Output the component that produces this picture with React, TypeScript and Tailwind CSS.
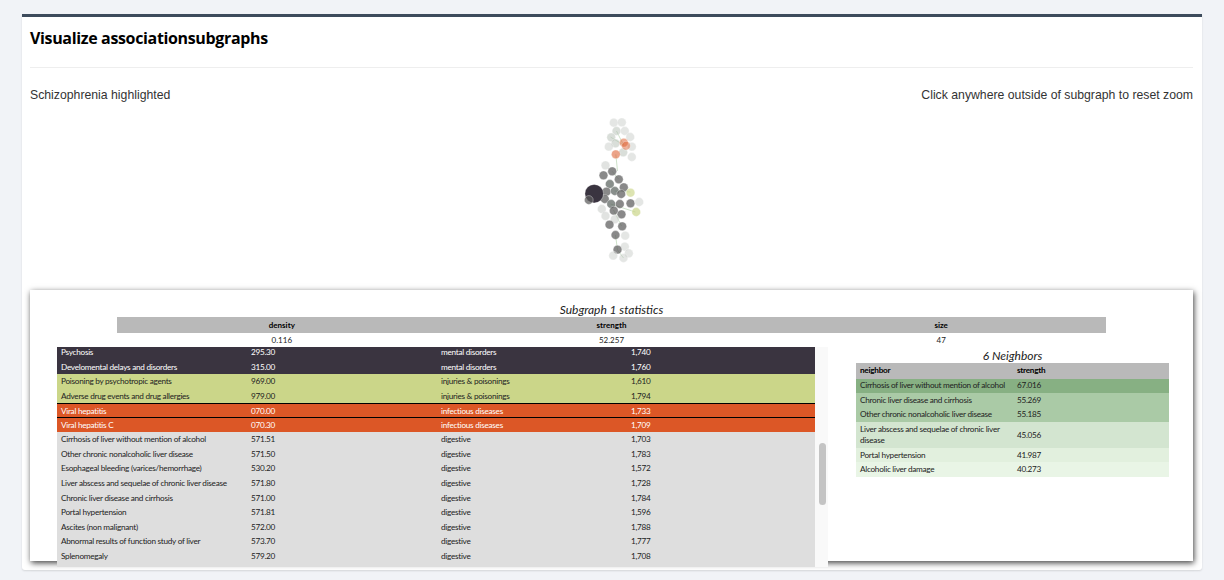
const nodes: [number, number, number, string, number][] = [
  // upper cluster
  [613.3, 122.7, 4.4, "#c4c8c4", 0.45],
  [621.3, 122.3, 4.4, "#c4c8c4", 0.45],
  [616, 131, 4.4, "#b4beb4", 0.5],
  [624.3, 131, 4.4, "#c4c8c4", 0.45],
  [610.7, 137.3, 4.4, "#b4beb4", 0.5],
  [629.7, 137, 4.4, "#c4c8c4", 0.45],
  [615, 143.3, 4.4, "#b4beb4", 0.5],
  [608.3, 146.7, 4.4, "#c4c8c4", 0.45],
  [631.3, 146.7, 4.4, "#c4c8c4", 0.45],
  [622.7, 152.3, 4.4, "#b4beb4", 0.5],
  [631.3, 157, 4.4, "#c4c8c4", 0.45],
  [623.3, 142.7, 4.4, "#dc5726", 0.5],
  [625.5, 145.7, 4.4, "#dc5726", 0.45],
  [615.3, 154.3, 4.4, "#dc5726", 0.55],
  // main cluster
  [605, 165.3, 4.4, "#c4c8c4", 0.5],
  [611.7, 171.3, 4.4, "#5c5c5c", 0.72],
  [603, 175.3, 4.4, "#5c5c5c", 0.72],
  [618.3, 179.3, 4.4, "#5c5c5c", 0.72],
  [609.3, 184, 4.4, "#5c6460", 0.72],
  [623.3, 187.3, 4.4, "#5c5c5c", 0.72],
  [606, 191.7, 4.4, "#5c5c5c", 0.72],
  [614.3, 191, 4.4, "#5c6460", 0.72],
  [620.7, 194, 4.4, "#5c5c5c", 0.72],
  [630, 192.7, 4.4, "#cbd689", 0.65],
  [604.3, 199, 4.4, "#5c5c5c", 0.72],
  [610.7, 204, 4.4, "#5c6460", 0.72],
  [619.3, 204, 4.4, "#5c5c5c", 0.72],
  [630, 203.3, 4.4, "#5c5c5c", 0.72],
  [638.7, 202, 4.4, "#c4c8c4", 0.45],
  [601.3, 209, 4.4, "#c4c8c4", 0.5],
  [613.3, 210.7, 4.4, "#5c5c5c", 0.72],
  [621, 214.3, 4.4, "#5c5c5c", 0.72],
  [635.7, 212, 4.4, "#cbd689", 0.7],
  [605, 216, 4.4, "#c4c8c4", 0.5],
  [614.3, 219.3, 4.4, "#c4c8c4", 0.5],
  [609, 224.7, 4.4, "#5c5c5c", 0.72],
  [621.7, 226.3, 4.4, "#5c5c5c", 0.72],
  [615, 235, 4.4, "#5c5c5c", 0.72],
  [624.7, 235.7, 4.4, "#c4c8c4", 0.45],
  [624.3, 246.7, 4.4, "#c4c8c4", 0.45],
  [617, 249.7, 4.4, "#5c5c5c", 0.72],
  [628.3, 253.3, 4.4, "#c4c8c4", 0.45],
  [612.7, 255.7, 4.4, "#c4c8c4", 0.45],
  [623, 258, 4.4, "#c4c8c4", 0.45],
  // schizophrenia
  [593.7, 193.7, 9.3, "#3a3440", 1],
  [588.3, 200, 4.4, "#5c5c5c", 0.72],
];

const edges: [number, number, number, number][] = [
  [615.3, 154.3, 617, 171],
  [623, 145, 616, 131],
  [623, 145, 610, 137],
  [611.7, 171.3, 618, 179],
  [614, 191, 630, 192],
  [610, 204, 635, 212],
  [613, 210, 621, 226],
  [615, 235, 617, 250],
  [617, 250, 623, 258],
];

const diseases = [
  ["Psychosis", "295.30", "mental disorders", "1,740", "dark"],
  ["Develomental delays and disorders", "315.00", "mental disorders", "1,760", "dark"],
  ["Poisoning by psychotropic agents", "969.00", "injuries & poisonings", "1,610", "green"],
  ["Adverse drug events and drug allergies", "979.00", "injuries & poisonings", "1,794", "green"],
  ["Viral hepatitis", "070.00", "infectious diseases", "1,733", "orange"],
  ["Viral hepatitis C", "070.30", "infectious diseases", "1,709", "orange"],
  ["Cirrhosis of liver without mention of alcohol", "571.51", "digestive", "1,703", "gray"],
  ["Other chronic nonalcoholic liver disease", "571.50", "digestive", "1,783", "gray"],
  ["Esophageal bleeding (varices/hemorrhage)", "530.20", "digestive", "1,572", "gray"],
  ["Liver abscess and sequelae of chronic liver disease", "571.80", "digestive", "1,728", "gray"],
  ["Chronic liver disease and cirrhosis", "571.00", "digestive", "1,784", "gray"],
  ["Portal hypertension", "571.81", "digestive", "1,596", "gray"],
  ["Ascites (non malignant)", "572.00", "digestive", "1,788", "gray"],
  ["Abnormal results of function study of liver", "573.70", "digestive", "1,777", "gray"],
  ["Splenomegaly", "579.20", "digestive", "1,708", "gray"],
];

const rowColors: Record<string, string> = {
  dark: "bg-[#3a3440] text-white",
  green: "bg-[#cbd689] text-[#222222]",
  orange: "bg-[#dc5726] text-white",
  gray: "bg-[#dedede] text-[#222222]",
};

const neighbors = [
  { name: "Cirrhosis of liver without mention of alcohol", strength: "67.016", color: "bg-[#87b083]", h: "h-[14.6px]" },
  { name: "Chronic liver disease and cirrhosis", strength: "55.269", color: "bg-[#aacaa6]", h: "h-[14.6px]" },
  { name: "Other chronic nonalcoholic liver disease", strength: "55.185", color: "bg-[#aacaa6]", h: "h-[14.6px]" },
  { name: "Liver abscess and sequelae of chronic liver disease", strength: "45.056", color: "bg-[#d3e5d0]", h: "h-[25.5px]" },
  { name: "Portal hypertension", strength: "41.987", color: "bg-[#e2f0de]", h: "h-[14.6px]" },
  { name: "Alcoholic liver damage", strength: "40.273", color: "bg-[#e9f5e6]", h: "h-[14.6px]" },
];

const tableFont = "font-['Lato','Noto_Sans',sans-serif]";

export default function App() {
  return (
    <div className="h-[580px] overflow-hidden bg-[#f1f3f7] px-[22px] pt-[14px]">
      <div className="h-[556px] rounded-b-[3px] border-t-[3px] border-[#3d4b5c] bg-white pl-2 pr-[9px] shadow-[0_1px_2px_rgba(0,0,0,0.12)]">
        <h2 className="h-[51px] border-b border-[#eeeeee] pt-[9px] font-['Open_Sans',sans-serif] text-[16px] leading-[24px] font-bold tracking-[-0.35px] text-black">
          Visualize associationsubgraphs
        </h2>
        <div className="mt-[19px] flex justify-between font-['Liberation_Sans',sans-serif] text-[12.25px] leading-[17px] text-[#333333]">
          <span>Schizophrenia highlighted</span>
          <span>Click anywhere outside of subgraph to reset zoom</span>
        </div>

        <svg viewBox="561.5 107 100 170" className="mx-auto mt-[3px] block h-[170px] w-[100px]">
          {edges.map(([x1, y1, x2, y2], i) => (
            <line key={i} x1={x1} y1={y1} x2={x2} y2={y2} stroke="#cfe3cb" strokeWidth="1" />
          ))}
          {nodes.map(([cx, cy, r, fill, opacity], i) => (
            <circle key={i} cx={cx} cy={cy} r={r} fill={fill} fillOpacity={opacity} stroke="#ffffff" strokeOpacity="0.7" strokeWidth="0.5" />
          ))}
        </svg>

        <div className={`mt-[13px] h-[271px] bg-white pt-[13px] shadow-[1px_2px_6px_rgba(0,0,0,0.75)] ${tableFont}`}>
          <h3 className="text-center text-[12px] leading-[14px] text-[#222222] italic">Subgraph 1 statistics</h3>
          <table className="mx-[87px] w-[989px] table-fixed text-center text-[8px] text-[#222222]">
            <thead>
              <tr className="h-[16px] bg-[#b9b9b9] font-bold text-black">
                <th>density</th>
                <th>strength</th>
                <th>size</th>
              </tr>
            </thead>
            <tbody>
              <tr className="h-[14px]">
                <td>0.116</td>
                <td>52.257</td>
                <td>47</td>
              </tr>
            </tbody>
          </table>

          <div className="flex items-start pl-[27px]">
            <div className="flex h-[220px] w-[771px] overflow-hidden">
              <table className="-mt-[2px] h-fit w-[758px] table-fixed border-collapse text-[8.2px] leading-[10px] tracking-[-0.27px]">
                <colgroup>
                  <col className="w-[190px]" />
                  <col className="w-[190px]" />
                  <col className="w-[190px]" />
                  <col className="w-[188px]" />
                </colgroup>
                <tbody>
                  {diseases.map(([name, code, category, count, tone], i) => (
                    <tr
                      key={name}
                      className={`${rowColors[tone]} ${i === 4 || i === 5 ? "h-[14.3px] border-t-[1.5px] border-black" : "h-[14.6px]"}`}
                    >
                      <td className="pl-1 whitespace-nowrap">{name}</td>
                      <td className="pl-1">{code}</td>
                      <td className="pl-1">{category}</td>
                      <td className="pl-1">{count}</td>
                    </tr>
                  ))}
                  <tr className="h-[14.6px] bg-[#dedede]">
                    <td colSpan={4} />
                  </tr>
                </tbody>
              </table>
              <div className="w-[13px] bg-[#f9f9f9] pt-[96px] pl-1">
                <div className="h-[62px] w-[7px] rounded bg-[#c4c4c4]" />
              </div>
            </div>

            <div className="ml-[28px] w-[313px]">
              <h3 className="pt-[2px] text-center text-[12px] leading-[14px] text-[#222222] italic">6 Neighbors</h3>
              <table className="w-full table-fixed border-collapse text-[8.2px] leading-[11px] tracking-[-0.27px] text-[#222222]">
                <colgroup>
                  <col className="w-[157px]" />
                  <col />
                </colgroup>
                <thead>
                  <tr className="h-[15.5px] bg-[#b9b9b9] text-left font-bold text-black">
                    <th className="pl-1">neighbor</th>
                    <th className="pl-1">strength</th>
                  </tr>
                </thead>
                <tbody>
                  {neighbors.map((n) => (
                    <tr key={n.name} className={`${n.color} ${n.h}`}>
                      <td className="pl-1">{n.name}</td>
                      <td className="pl-1">{n.strength}</td>
                    </tr>
                  ))}
                </tbody>
              </table>
            </div>
          </div>
        </div>
      </div>
    </div>
  );
}
